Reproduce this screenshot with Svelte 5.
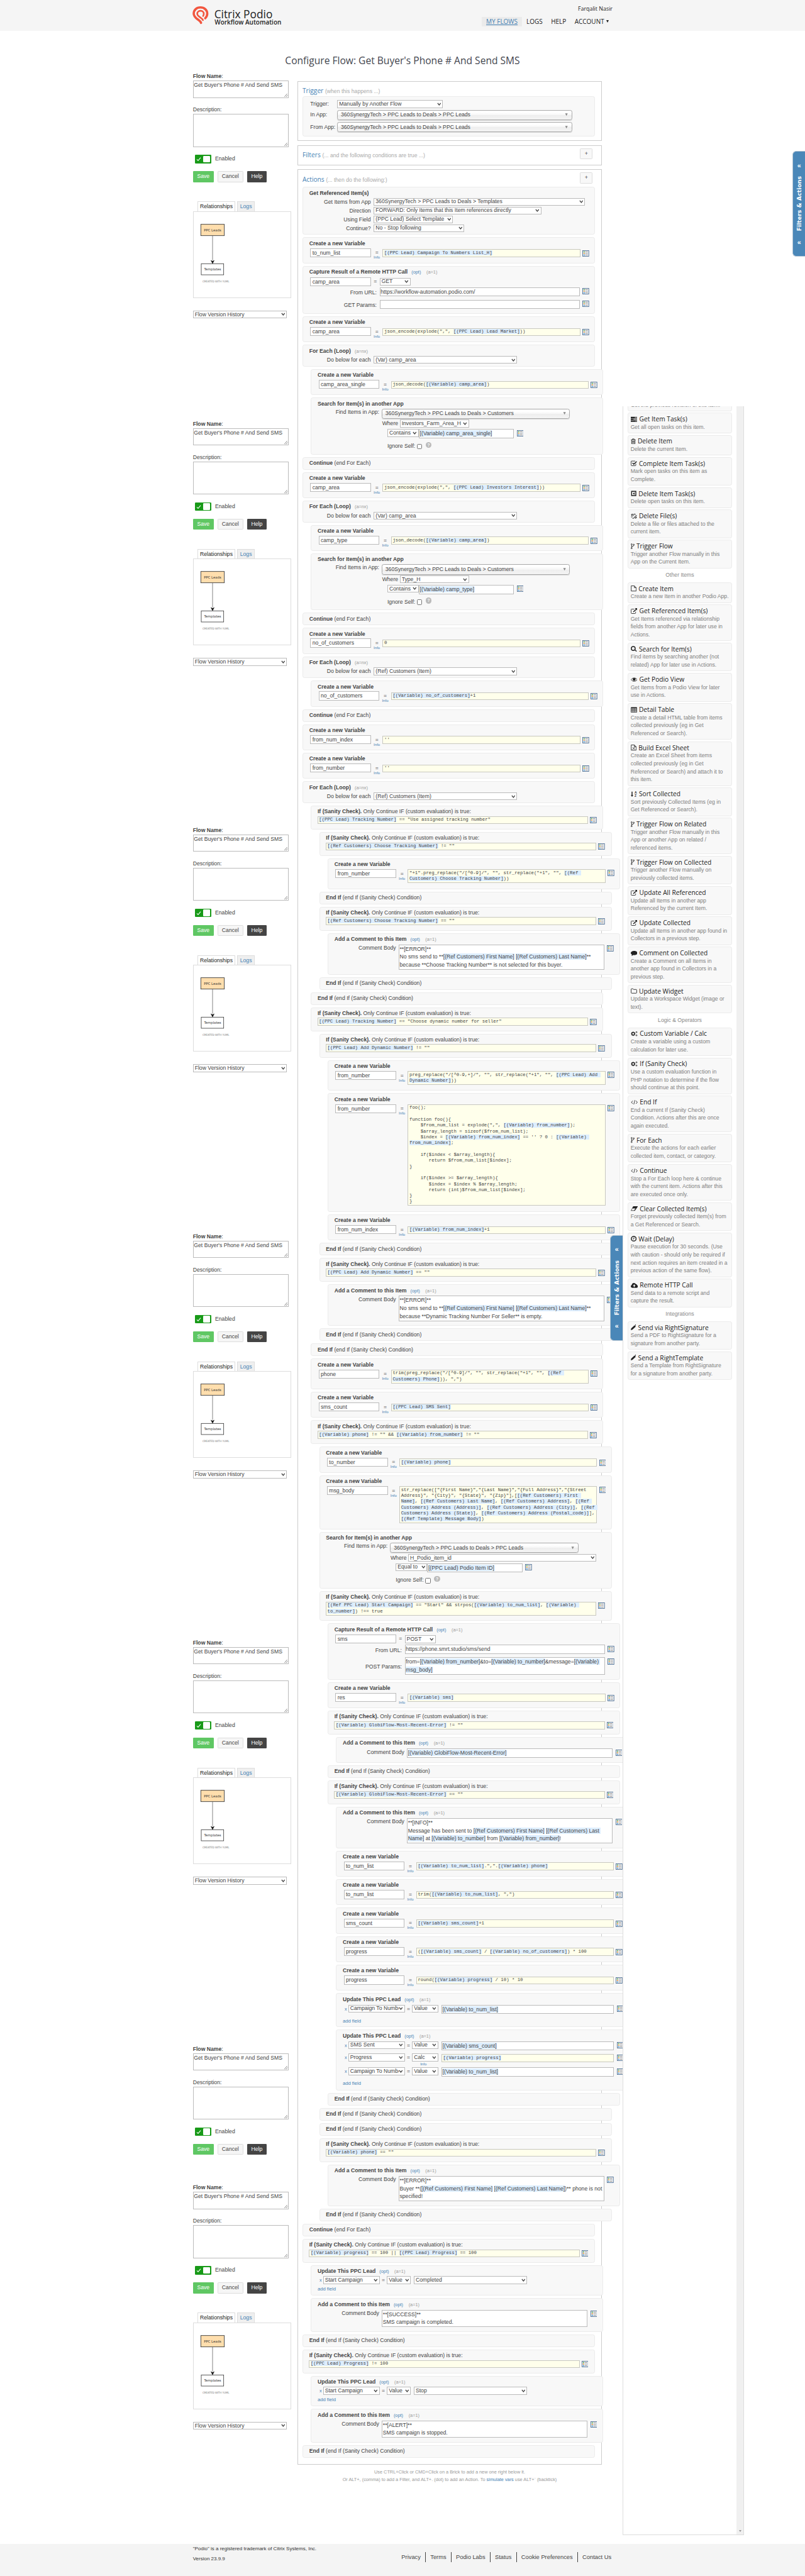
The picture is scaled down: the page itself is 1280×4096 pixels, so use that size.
<script>
  // One entry per brick in the flow: kind, nesting level and its contents.
  const v = (l, name, code) => ({ k: 'var', l, name, code });
  const iff = (l, code) => ({ k: 'if', l, code });
  const endIf = (l) => ({ k: 'end', l, head: 'End If', rest: ' (end If (Sanity Check) Condition)' });
  const cont = (l) => ({ k: 'end', l, head: 'Continue', rest: ' (end For Each)' });
  const each = (l, val) => ({ k: 'each', l, val });
  const comment = (l, code) => ({ k: 'comment', l, code });

  const bricks = [
    { k: 'ref', l: 0, code: '' },
    v(0, 'to_num_list', '[(PPC Lead) Campaign To Numbers List_H]'),
    { k: 'http', l: 0, name: 'camp_area', method: 'GET', url: 'https://workflow-automation.podio.com/', code: '' },
    v(0, 'camp_area', 'json_encode(explode(",", [(PPC Lead) Lead Market]))'),
    each(0, '(Var) camp_area'),
    v(1, 'camp_area_single', 'json_decode([(Variable) camp_area])'),
    { k: 'search', l: 1, app: 'Customers', field: 'Investors_Farm_Area_H', op: 'Contains', code: '[(Variable) camp_area_single]' },
    cont(0),
    v(0, 'camp_area', 'json_encode(explode(",", [(PPC Lead) Investors Interest]))'),
    each(0, '(Var) camp_area'),
    v(1, 'camp_type', 'json_decode([(Variable) camp_area])'),
    { k: 'search', l: 1, app: 'Customers', field: 'Type_H', op: 'Contains', code: '[(Variable) camp_type]' },
    cont(0),
    v(0, 'no_of_customers', '0'),
    each(0, '(Ref) Customers (Item)'),
    v(1, 'no_of_customers', '[(Variable) no_of_customers]+1'),
    cont(0),
    v(0, 'from_num_index', "''"),
    v(0, 'from_number', "''"),
    each(0, '(Ref) Customers (Item)'),
    iff(1, '[(PPC Lead) Tracking Number] == "Use assigned tracking number"'),
    iff(2, '[(Ref Customers) Choose Tracking Number] != ""'),
    v(3, 'from_number', '"+1".preg_replace("/[^0-9]/", "", str_replace("+1", "", [(Ref \nCustomers) Choose Tracking Number]))'),
    endIf(2),
    iff(2, '[(Ref Customers) Choose Tracking Number] == ""'),
    comment(3, '**[ERROR]**\nNo sms send to **[(Ref Customers) First Name] [(Ref Customers) Last Name]**\nbecause **Choose Tracking Number** is not selected for this buyer.'),
    endIf(2),
    endIf(1),
    iff(1, '[(PPC Lead) Tracking Number] == "Choose dynamic number for seller"'),
    iff(2, '[(PPC Lead) Add Dynamic Number] != ""'),
    v(3, 'from_number', 'preg_replace("/[^0-9,+]/", "", str_replace("+1", "", [(PPC Lead) Add \nDynamic Number]))'),
    v(3, 'from_number', `foo();

function foo(){
    $from_num_list = explode(",", [(Variable) from_number]);
    $array_length = sizeof($from_num_list);
    $index = [(Variable) from_num_index] == '' ? 0 : [(Variable) 
from_num_index];

    if($index < $array_length){
       return $from_num_list[$index];
}

    if($index >= $array_length){
       $index = $index % $array_length;
       return (int)$from_num_list[$index];
}
}`),
    v(3, 'from_num_index', '[(Variable) from_num_index]+1'),
    endIf(2),
    iff(2, '[(PPC Lead) Add Dynamic Number] == ""'),
    comment(3, '**[ERROR]**\nNo sms send to **[(Ref Customers) First Name] [(Ref Customers) Last Name]**\nbecause **Dynamic Tracking Number For Seller** is empty.'),
    endIf(2),
    endIf(1),
    v(1, 'phone', 'trim(preg_replace("/[^0-9]/", "", str_replace("+1", "", [(Ref \nCustomers) Phone])), ",")'),
    v(1, 'sms_count', '[(PPC Lead) SMS Sent]'),
    iff(1, '[(Variable) phone] != "" && [(Variable) from_number] != ""'),
    v(2, 'to_number', '[(Variable) phone]'),
    v(2, 'msg_body', 'str_replace(["{First Name}","{Last Name}","{Full Address}","{Street\nAddress}", "{City}", "{State}", "{Zip}"],[[(Ref Customers) First \nName], [(Ref Customers) Last Name], [(Ref Customers) Address], [(Ref \nCustomers) Address (Address)], [(Ref Customers) Address (City)], [(Ref \nCustomers) Address (State)], [(Ref Customers) Address (Postal_code)]],\n[(Ref Template) Message Body])'),
    { k: 'search', l: 2, app: 'PPC Leads', field: 'H_Podio_item_id', wide: true, op: 'Equal to', code: '[(PPC Lead) Podio Item ID]' },
    iff(2, '[(Ref PPC Lead) Start Campaign] == "Start" && strpos([(Variable) to_num_list], [(Variable) \nto_number]) !== true'),
    { k: 'http', l: 3, name: 'sms', method: 'POST', url: 'https://phone.smrt.studio/sms/send', code: 'from=[(Variable) from_number]&to=[(Variable) to_number]&message=[(Variable) \nmsg_body]' },
    v(3, 'res', '[(Variable) sms]'),
    iff(3, '[(Variable) GlobiFlow-Most-Recent-Error] != ""'),
    comment(4, '[(Variable) GlobiFlow-Most-Recent-Error]'),
    endIf(3),
    iff(3, '[(Variable) GlobiFlow-Most-Recent-Error] == ""'),
    comment(4, '**[INFO]**\nMessage has been sent to [(Ref Customers) First Name] [(Ref Customers) Last \nName] at [(Variable) to_number] from [(Variable) from_number]!'),
    v(4, 'to_num_list', '[(Variable) to_num_list].",".[(Variable) phone]'),
    v(4, 'to_num_list', 'trim([(Variable) to_num_list], ",")'),
    v(4, 'sms_count', '[(Variable) sms_count]+1'),
    v(4, 'progress', '([(Variable) sms_count] / [(Variable) no_of_customers]) * 100'),
    v(4, 'progress', 'round([(Variable) progress] / 10) * 10'),
    { k: 'update', l: 4, h: 81, rows: [['Campaign To Numbers', 'Value', '[(Variable) to_num_list]']] },
    { k: 'update', l: 4, h: 144.3, rows: [
      ['SMS Sent', 'Value', '[(Variable) sms_count]'],
      ['Progress', 'Calc', '[(Variable) progress]'],
      ['Campaign To Numbers', 'Value', '[(Variable) to_num_list]'],
    ] },
    endIf(3),
    endIf(2),
    endIf(2),
    iff(2, '[(Variable) phone] == ""'),
    comment(3, '**[ERROR]**\nBuyer **([(Ref Customers) First Name] [(Ref Customers) Last Name])** phone is not\nspecified!'),
    endIf(2),
    cont(0),
    iff(0, '[(Variable) progress] == 100 || [(PPC Lead) Progress] == 100'),
    { k: 'update', l: 1, h: 73, rows: [['Start Campaign', 'Pick', 'Completed']] },
    comment(1, '**[SUCCESS]**\nSMS campaign is completed.'),
    endIf(0),
    iff(0, '[(PPC Lead) Progress] != 100'),
    { k: 'update', l: 1, h: 73, rows: [['Start Campaign', 'Pick', 'Stop']] },
    comment(1, '**[ALERT]**\nSMS campaign is stopped.'),
    endIf(0),
  ];

  const lines = (s) => s.split('\n').length;

  function height(b) {
    const n = lines(b.code ?? '');
    switch (b.k) {
      case 'ref': return 114;
      case 'var': return n === 1 ? 62.03 : 14 * n + 45;
      case 'http': return n === 1 ? 114.6 : 134.2;
      case 'each': return 52;
      case 'search': return 135.4;
      case 'if': return 14 * n + 43;
      case 'comment': return 19.15 * n + 41.7;
      case 'update': return b.h;
      default: return 30;
    }
  }

  // Splits text into plain runs and highlighted [(…) …] tokens; a token that wraps becomes one run per line.
  function runs(s) {
    return s
      .split(/(\[\([^\]]*\])/)
      .filter((p) => p !== '')
      .flatMap((p) => {
        const tok = p.startsWith('[(');
        return p.split(/(\n)/).filter((t) => t !== '').map((t) => ({ t, tok: tok && t !== '\n' }));
      });
  }

  const sidebars = [829, 969, 969, 969, 969, 330.5, 640];

  const tools = [
    ['tasks', 'Get Item Task(s)', 'Get all open tasks on this item.'],
    ['trash', 'Delete Item', 'Delete the current Item.'],
    ['check', 'Complete Item Task(s)', 'Mark open tasks on this item as\nComplete.'],
    ['caret', 'Delete Item Task(s)', 'Delete open tasks on this item.'],
    ['unlink', 'Delete File(s)', 'Delete a file or files attached to the\ncurrent item.'],
    ['fork', 'Trigger Flow', 'Trigger another Flow manually in this\nApp on the Current Item.'],
    ['', 'Other Items'],
    ['file', 'Create Item', 'Create a new Item in another Podio App.'],
    ['ext', 'Get Referenced Item(s)', 'Get Items referenced via relationship\nfields from another App for later use in\nActions.'],
    ['search', 'Search for Item(s)', 'Find items by searching another (not\nrelated) App for later use in Actions.'],
    ['eye', 'Get Podio View', 'Get Items from a Podio View for later\nuse in Actions.'],
    ['table', 'Detail Table', 'Create a detail HTML table from items\ncollected previously (eg in Get\nReferenced or Search).'],
    ['excel', 'Build Excel Sheet', 'Create an Excel Sheet from items\ncollected previously (eg in Get\nReferenced or Search) and attach it to\nthis item.'],
    ['sort', 'Sort Collected', 'Sort previously Collected Items (eg in\nGet Referenced or Search).'],
    ['fork', 'Trigger Flow on Related', 'Trigger another Flow manually in this\nApp or another App on related /\nreferenced items.'],
    ['fork', 'Trigger Flow on Collected', 'Trigger another Flow manually on\npreviously collected items.'],
    ['ext', 'Update All Referenced', 'Update all Items in another app\nReferenced by the current Item.'],
    ['ext', 'Update Collected', 'Update all Items in another app found in\nCollectors in a previous step.'],
    ['comment', 'Comment on Collected', 'Create a Comment on all Items in\nanother app found in Collectors in a\nprevious step.'],
    ['folder', 'Update Widget', 'Update a Workspace Widget (image or\ntext).'],
    ['', 'Logic & Operators'],
    ['cogs', 'Custom Variable / Calc', 'Create a variable using a custom\ncalculation for later use.'],
    ['cogs', 'If (Sanity Check)', 'Use a custom evaluation function in\nPHP notation to determine if the flow\nshould continue at this point.'],
    ['code', 'End If', 'End a current If (Sanity Check)\nCondition. Actions after this are once\nagain executed.'],
    ['fork', 'For Each', 'Execute the actions for each earlier\ncollected item, contact, or category.'],
    ['code', 'Continue', 'Stop a For Each loop here & continue\nwith the current item. Actions after this\nare executed once only.'],
    ['eraser', 'Clear Collected Item(s)', 'Forget previously collected Item(s) from\na Get Referenced or Search.'],
    ['clock', 'Wait (Delay)', 'Pause execution for 30 seconds. (Use\nwith caution - should only be required if\nnext action requires an item created in a\nprevious action of the same flow).'],
    ['cloud', 'Remote HTTP Call', 'Send data to a remote script and\ncapture the result.'],
    ['', 'Integrations'],
    ['pencil', 'Send via RightSignature', 'Send a PDF to RightSignature for a\nsignature from another party.'],
    ['pencil', 'Send a RightTemplate', 'Send a Template from RightSignature\nfor a signature from another party.'],
  ];

  // Glyph width plus filled (f), cut-out (h), thin (s) and bold (b) outlines and rings (r) on a 14-unit high grid.
  const glyphs = {
    tasks: { w: 16, f: 'M0 1h16v3.4H0zM0 5.3h16v3.4H0zM0 9.6h16V13H0z', h: 'M9.5 2.2h5.5v1H9.5zM6.5 6.5h8.5v1H6.5zM11 10.8h4v1h-4z' },
    trash: { w: 12, s: 'M.5 3.5h11M4 3V1.3h4V3M2 3.8V13h8V3.8M4.3 5.8v5M6 5.8v5M7.7 5.8v5' },
    check: { w: 15, s: 'M12 8v3.5c0 .8-.5 1.3-1.3 1.3H2c-.8 0-1.3-.5-1.3-1.3V3C.7 2.2 1.2 1.7 2 1.7h8.5', b: 'M4 6l3.2 3.2L14 2.6' },
    caret: { w: 14, b: 'M2 2h10v10H2z', f: 'M9 4v6L4.8 7z' },
    unlink: { w: 15, s: 'M7 5.500L4.300 2.500C3 1.500.8 3.500 2 5l2.600 2.400M8 8.500l2.700 3c1.300 1 3.500-1 2.300-2.500L10.400 6.600M8 1v2.200M11 1.500L9.800 3.800M.8 8.800L3 9.500M7 13v-2.200M4 12.800l1-2M14.200 5.200l-2.300.4', fat: 1 },
    fork: { w: 9, s: 'M2 3.5v7M7.2 4.5c0 3-4.8 2-5.2 5', r: [[2, 2.2], [2, 11.8], [7, 3.2]] },
    file: { w: 14, s: 'M1 .8h7.5L13 5v8.2H1zM8.5 1v4.2H13' },
    excel: { w: 14, s: 'M1 .8h7.5L13 5v8.2H1zM8.5 1v4.2H13M4.4 6.200l5 5M9.400 6.200l-5 5' },
    ext: { w: 16, s: 'M11.5 8.5v3c0 .8-.5 1.3-1.3 1.3H2c-.8 0-1.3-.5-1.3-1.3V3.6c0-.8.5-1.3 1.3-1.3h6', b: 'M6 9l6.5-5.8', f: 'M9.5 0H16v6z' },
    search: { w: 15, b: 'M9.9 9.4l3.8 3.6M10.5 6.2a4.6 4.6 0 1 1-9.2 0a4.6 4.6 0 0 1 9.2 0z' },
    eye: { w: 16, s: 'M.7 7C4.5 1.6 11.5 1.6 15.3 7C11.5 12.4 4.5 12.4.7 7z', f: 'M11.4 6.5a3.4 3.4 0 1 1-6.8 0a3.4 3.4 0 0 1 6.800 0z' },
    table: { w: 15, s: 'M.8 1.5h13.4v11.5H.8zM.8 5.5h13.4M.8 9.2h13.4M5.2 2v11M9.8 2v11', f: 'M.8 1.2h13.4v2H.8z' },
    sort: { w: 15, b: 'M3 1v9.5', f: 'M0 9.5h6L3 13.5z', t: 1 },
    comment: { w: 16, f: 'M8 1.5c4.4 0 8 2.2 8 5s-3.6 5-8 5c-.8 0-1.5 0-2.2-.2C4.6 12.5 3 13.2 1.2 13.3c.8-.8 1.4-1.6 1.5-2.800C1 9.500 0 8.100 0 6.500c0-2.800 3.600-5 8-5z' },
    folder: { w: 15, s: 'M.8 3c0-.7.5-1.2 1.2-1.2h3.2l1.3 1.7h6.3c.8 0 1.3.5 1.3 1.2v6.5c0 .7-.5 1.2-1.3 1.2H2c-.7 0-1.2-.5-1.2-1.2z' },
    cogs: { w: 17, b: 'M9 7.2a3.3 3.3 0 1 1-6.6 0a3.3 3.3 0 0 1 6.6 0z', s: 'M5.7 2v2M5.7 10.4v2M.4 7.2h2M9 7.2h2M2 3.5l1.5 1.5M7.9 9.4l1.5 1.5M9.4 3.5L7.9 5M3.5 9.4L2 10.9', r: [[13.6, 3.4], [13.6, 10.9]] },
    code: { w: 17, s: 'M5 3.5L1.2 7 5 10.5M12 3.5L15.8 7 12 10.5M9.8 2L7.2 12' },
    eraser: { w: 17, f: 'M6.5 1.5h9.7c.6 0 .8.5.5 1l-6.5 9c-.4.6-.9 1-1.6 1H.8c-.6 0-.8-.5-.5-1l4.8-9c.3-.6.7-1 1.4-1z', h: 'M3.8 6.8h7.4l-3.3 4.5H1.5z' },
    clock: { w: 14, b: 'M12.7 7a5.7 5.5 0 1 1-11.4 0a5.7 5.5 0 0 1 11.4 0z', s: 'M7.5 3.5v4H4.5' },
    cloud: { w: 17, f: 'M4 13C1.8 13 0 11.5 0 9.5c0-1.6 1-2.8 2.4-3.3C2.4 3.5 4.5 1.5 7.3 1.5c2 0 3.8 1.1 4.5 2.7 1.6-.2 3 1 3 2.5 1.4.4 2.2 1.5 2.2 3 0 1.9-1.5 3.3-3.5 3.3z', h: 'M8.2 4.8l3.3 3.5H9.3v2.9H7.1V8.3H4.9z' },
    pencil: { w: 13, f: 'M0 13.5l.9-4L9 1.8l3 2.9L3.9 12.5zM9.8 1l1-.8c.4-.3.9-.3 1.2 0l1 1c.4.4.4.9 0 1.3l-.9.9z' },
  };

  const footLinks = ['Privacy', 'Terms', 'Podio Labs', 'Status', 'Cookie Preferences', 'Contact Us'];
</script>

{#snippet rich(s)}{#each runs(s) as r}{#if r.tok}<span class="tok">{r.t}</span>{:else}{r.t}{/if}{/each}{/snippet}

{#snippet sel(text, cls)}
  <div class="sel {cls}"><span>{text}</span><svg viewBox="0 0 10 8"><path d="M1.3 1.5L5 6l3.7-4.5" /></svg></div>
{/snippet}

{#snippet chosen(text, cls)}
  <div class="chosen {cls}"><span>{text}</span><svg viewBox="0 0 8 8"><path d="M.5 .5h7L4 7.5z" /></svg></div>
{/snippet}

{#snippet picker()}
  <svg class="picker" viewBox="0 0 16 15">
    <rect x=".7" y=".7" width="14.6" height="13.6" fill="#fbfcfe" stroke="#4f6f93" stroke-width="1.4" />
    <circle cx="4.2" cy="3.8" r="1.5" fill="#3d9a3d" />
    <circle cx="4.2" cy="7.5" r="1.5" fill="#e0872a" />
    <circle cx="4.2" cy="11.2" r="1.5" fill="#2d86c8" />
    <path d="M7.2 3.8h6M7.2 7.5h6M7.2 11.2h6" stroke="#555" stroke-width="1.3" stroke-dasharray="2.2 .6" />
  </svg>
{/snippet}

{#snippet title(text, opt, a)}
  <div class="title"><b>{text}</b>{#if opt}<span class="opt">(opt)</span>{/if}{#if a}<span class="arg">({a})</span>{/if}</div>
{/snippet}

<div class="page">
  <header>
    <svg class="logo" viewBox="0 0 216 52" width="216" height="52">
      <g fill="none" stroke="#f2563f" stroke-width="5.4" stroke-linecap="round">
        <path d="M20.5 39.500C18 32 3 29 3 17.5C3 9 9.5 2.7 19 2.7C28.5 2.7 35.3 9 35.3 17.5C35.3 22 33.5 25.5 30.5 28.5" />
        <path d="M25 33C22.5 26 11.5 25 11.5 18C11.5 13.6 15 10.8 19.2 10.8C23.5 10.8 27 13.6 27 18C27 20.2 26.4 21.8 25.4 23.2" stroke-width="4" />
      </g>
      <text x="52" y="28" font-size="27.5" textLength="139" lengthAdjust="spacingAndGlyphs">Citrix Podio</text>
      <text x="53" y="43.5" font-size="17" font-weight="600" textLength="159" lengthAdjust="spacingAndGlyphs">Workflow Automation</text>
    </svg>
    <div class="who">
      <div class="user">Farqalit Nasir</div>
      <nav><a class="on">MY FLOWS</a><a>LOGS</a><a>HELP</a><a>ACCOUNT<i></i></a></nav>
    </div>
  </header>

  <h1>Configure Flow: Get Buyer's Phone # And Send SMS</h1>

  <main>
    <aside class="left">
      {#each sidebars as h, i}
        <section style="height:{h}px">
          <div class="lab"><b>Flow Name</b>:</div>
          <div class="area small">Get Buyer's Phone # And Send SMS<svg class="grip" viewBox="0 0 8 8"><path d="M0 8L7 0M4 8l4-4.5" /></svg></div>
          <div class="lab desc">Description:</div>
          <div class="area big"><svg class="grip" viewBox="0 0 8 8"><path d="M0 8L7 0M4 8l4-4.5" /></svg></div>
          <div class="enabled">
            <div class="toggle"><svg viewBox="0 0 12 10"><path d="M1 5.5L4.3 9L11 1" /></svg><i></i></div>
            <span>Enabled</span>
          </div>
          <div class="btns"><span class="save">Save</span><span class="cancel">Cancel</span><span class="help">Help</span></div>
          {#if i !== 5}
            <div class="tabs"><span class="cur">Relationships</span><span class="other">Logs</span></div>
            <div class="rel">
              <svg viewBox="0 0 232 204" width="232" height="204">
                <rect x="17" y="29.5" width="56" height="27" fill="#ffdead" stroke="#333" stroke-width="1.3" />
                <text x="45" y="46" text-anchor="middle">PPC Leads</text>
                <path d="M45 57v58" stroke="#444" stroke-width="1" />
                <path d="M41 115.5l4 2 4-2-4 8z" fill="#111" stroke="#111" stroke-width=".6" />
                <rect x="18" y="123.5" width="53.5" height="26.5" fill="#fff" stroke="#333" stroke-width="1.2" />
                <text x="45" y="140" text-anchor="middle">Templates</text>
                <text x="21" y="168.5" class="yuml" textLength="64">CREATED WITH YUML</text>
              </svg>
            </div>
            {@render sel('Flow Version History', 'hist')}
          {/if}
        </section>
      {/each}
    </aside>

    <div class="center">
      <div class="panel trig">
        <div class="phead"><h2>Trigger</h2><small>(when this happens ...)</small></div>
        <div class="brick tbrick">
          <div class="trow"><span class="tl">Trigger:</span>{@render sel('Manually by Another Flow', 'w252')}</div>
          <div class="trow app"><span class="tl">In App:</span>{@render chosen('360SynergyTech > PPC Leads to Deals > PPC Leads', 'w560')}</div>
          <div class="trow app"><span class="tl">From App:</span>{@render chosen('360SynergyTech > PPC Leads to Deals > PPC Leads', 'w560')}</div>
        </div>
      </div>
      <div class="panel filt">
        <div class="phead"><h2>Filters</h2><small>(... and the following conditions are true ...)</small><span class="plus">+</span></div>
      </div>
      <div class="panel acts">
        <div class="phead"><h2>Actions</h2><small>(... then do the following:)</small><span class="plus">+</span></div>
        {#each bricks as b}
          <div class="brick l{b.l}" style="height:{height(b)}px">
            {#if b.k === 'ref'}
              {@render title('Get Referenced Item(s)')}
              <div class="frow"><span class="fl">Get Items from App</span>{@render sel('360SynergyTech > PPC Leads to Deals > Templates', 'w504')}</div>
              <div class="frow"><span class="fl">Direction</span>{@render sel('FORWARD: Only Items that this Item references directly', 'w400')}</div>
              <div class="frow"><span class="fl">Using Field</span>{@render sel('(PPC Lead) Select Template', 'w189')}</div>
              <div class="frow"><span class="fl">Continue?</span>{@render sel('No - Stop following', 'w216')}</div>
            {:else if b.k === 'var'}
              {@render title('Create a new Variable')}
              <div class="row">
                <div class="name">{b.name}</div>
                <div class="eq">=<em>Info</em></div>
                <div class="code w471" class:one={lines(b.code) === 1}>{@render rich(b.code)}</div>
                <div class="pk" class:low={lines(b.code) === 1}>{@render picker()}</div>
              </div>
            {:else if b.k === 'http'}
              {@render title('Capture Result of a Remote HTTP Call', true, 'a=1')}
              <div class="row r26"><div class="name n2">{b.name}</div><div class="eqs">=</div>{@render sel(b.method, 'meth')}</div>
              <div class="row r30"><span class="hl">From URL:</span><div class="box w477">{b.url}</div>{@render picker()}</div>
              <div class="row"><span class="hl" class:tall={lines(b.code) > 1}>{b.method} Params:</span><div class="box w477">{@render rich(b.code)}</div>{@render picker()}</div>
            {:else if b.k === 'each'}
              <div class="title"><b>For Each (Loop)</b><span class="arg near">(a=nx)</span></div>
              <div class="frow each"><span class="fl">Do below for each</span>{@render sel(b.val, 'w342')}</div>
            {:else if b.k === 'search'}
              {@render title('Search for Item(s) in another App')}
              <div class="row s1"><span class="cl">Find Items in App:</span>{@render chosen('360SynergyTech > PPC Leads to Deals > ' + b.app, 'w449')}</div>
              <div class="row s2"><span class="wl">Where</span>{@render sel(b.field, b.wide ? 'w449' : 'w165')}</div>
              <div class="row s3">{@render sel(b.op, 'w75')}<div class="box w227">{@render rich(b.code)}</div>{@render picker()}</div>
              <div class="row s4"><span class="il">Ignore Self:</span><i class="cb"></i><span class="q">?</span></div>
            {:else if b.k === 'if'}
              <div class="title"><b>If (Sanity Check).</b> Only Continue IF (custom evaluation) is true:</div>
              <div class="row ifr"><div class="code w645">{@render rich(b.code)}</div><div class="pk">{@render picker()}</div></div>
            {:else if b.k === 'comment'}
              {@render title('Add a Comment to this Item', true, 'a=1')}
              <div class="row cm"><span class="cl">Comment Body</span><div class="box w491">{@render rich(b.code)}</div>{@render picker()}</div>
            {:else if b.k === 'update'}
              {@render title('Update This PPC Lead', true, 'a=1')}
              {#each b.rows as r}
                <div class="row up" class:calc={r[1] === 'Calc'} class:pick={r[1] === 'Pick'}>
                  <span class="x">x</span>{@render sel(r[0], 'w135')}<div class="eqs u">=</div>
                  {#if r[1] === 'Pick'}
                    {@render sel('Value', 'w57 gap')}{@render sel(r[2], 'w270')}
                  {:else}
                    <div class="modes">{@render sel(r[1], 'w62')}{#if r[1] === 'Calc'}<em>Info</em>{/if}</div>
                    {#if r[1] === 'Calc'}<div class="code w411">{@render rich(r[2])}</div>{:else}<div class="box w411">{@render rich(r[2])}</div>{/if}
                    {@render picker()}
                  {/if}
                </div>
              {/each}
              <div class="add"><a>add field</a></div>
            {:else}
              <div class="title"><b>{b.head}</b>{b.rest}</div>
            {/if}
          </div>
        {/each}
      </div>
      <p class="hint">Use CTRL+Click or CMD+Click on a Brick to add a new one right below it.<br />Or ALT+, (comma) to add a Filter, and ALT+. (dot) to add an Action. To <a>simulate vars</a> use ALT+` (backtick)</p>
    </div>

    <aside class="right">
      <div class="list">
        <div class="tool first"><p>Get the previous revision of this item.</p></div>
        {#each tools as t}
          {#if t[0]}
            {@const g = glyphs[t[0]]}
            <div class="tool">
              <h3>
                <svg viewBox="0 0 {g.w} 14" width={g.w} height="14">
                  {#if g.f}<path d={g.f} fill="#222" />{/if}
                  {#if g.h}<path d={g.h} fill="#f8f8f8" />{/if}
                  {#if g.s}<path d={g.s} fill="none" stroke="#222" stroke-width={g.fat ? 1.6 : 1.3} />{/if}
                  {#if g.b}<path d={g.b} fill="none" stroke="#222" stroke-width="2.2" />{/if}
                  {#each g.r ?? [] as c}<circle cx={c[0]} cy={c[1]} r="1.4" fill="none" stroke="#222" stroke-width="1.2" />{/each}
                  {#if g.t}<text x="9" y="6.5" class="az">A</text><text x="9" y="13.5" class="az">Z</text>{/if}
                </svg>{t[1]}
              </h3>
              <p>{t[2]}</p>
            </div>
          {:else}
            <div class="group">{t[1]}</div>
          {/if}
        {/each}
      </div>
      <div class="scroll"><i></i></div>
    </aside>
  </main>

  <footer>
    <div class="legal">"Podio" is a registered trademark of Citrix Systems, Inc.<br />Version 23.9.9</div>
    <div class="links">{#each footLinks as f}<a>{f}</a>{/each}</div>
  </footer>

  <div class="flag top"><b>«</b><span>Filters &amp; Actions</span><b>«</b></div>
  <div class="flag mid"><b>«</b><span>Filters &amp; Actions</span><b>«</b></div>
</div>

<style>
  :global(body) { margin: 0; background: #fff; }
  * { box-sizing: border-box; }
  .page {
    zoom: 0.66667; position: relative; display: flex; flex-direction: column;
    width: 1920px; height: 6144px; overflow: hidden; background: #fff;
    font: 13px/20px "Liberation Sans", Arial, sans-serif; color: #444;
  }
  em { font-style: normal; }
  a { color: #4682b4; }

  header { display: flex; justify-content: space-between; height: 73px; background: #f5f5f5; padding: 0 459px; flex: none; }
  .logo { margin-top: 15px; font-family: "Open Sans", sans-serif; fill: #222; overflow: visible; }
  .who { font-family: "Open Sans", sans-serif; color: #222; text-align: right; }
  .user { font-size: 13.3px; line-height: 20px; margin-top: 11.5px; }
  nav { display: flex; margin-top: 8.5px; }
  nav a { color: #222; font-size: 15px; line-height: 23px; padding: 0 10px; }
  nav a:last-child { padding-right: 9px; }
  nav a.on { color: #4682b4; background: #ebebeb; text-decoration: underline; padding: 0 11px; }
  nav i { display: inline-block; border: 4px solid transparent; border-top: 6px solid #222; border-bottom: 0; margin-left: 5px; vertical-align: 2px; }

  h1 { margin: 0; height: 93px; padding-top: 51.5px; font: 400 23.4px/40px "Open Sans", sans-serif; color: #43464f; text-align: center; flex: none; }
  main { display: grid; grid-template-columns: 250px 725px 50px 290px; padding-left: 460px; height: 5901px; flex: none; }

  .left { padding-top: 6.3px; }
  .lab { height: 20px; }
  .desc { margin-top: 18.5px; }
  .area { position: relative; width: 229px; border: 1.5px solid #bbb; background: #fff; padding-left: 1px; white-space: nowrap; }
  .small { height: 41.3px; }
  .big { height: 78.7px; }
  .grip { position: absolute; right: 1px; bottom: 1px; width: 8px; height: 8px; }
  .grip path { stroke: #555; stroke-width: 1; fill: none; }
  .enabled { display: flex; align-items: center; gap: 9.5px; margin: 19px 0 0 4.5px; }
  .toggle { display: flex; align-items: center; width: 39px; height: 20px; background: #189a18; border-radius: 2px; padding-left: 4px; }
  .toggle svg { width: 12px; height: 9px; }
  .toggle path { fill: none; stroke: #fff; stroke-width: 1.7; }
  .toggle i { width: 16.5px; height: 16px; margin-left: 4.5px; background: #fff; border-radius: 2px; }
  .btns { display: flex; margin-top: 19px; }
  .btns span { height: 26px; line-height: 25px; text-align: center; border-radius: 2px; }
  .btns .save { width: 50px; background: #5fc763; color: #fff; }
  .btns .cancel { width: 62px; margin: 0 8.5px; background: #f6f6f6; border: 1.5px solid #ddd; line-height: 23px; }
  .btns .help { width: 47.5px; background: #444; color: #fff; }
  .tabs { display: flex; gap: 4px; margin: 46px 0 0 10.5px; height: 23px; }
  .tabs span { border: 1.5px solid #ddd; border-bottom: 0; line-height: 22px; text-align: center; }
  .tabs .cur { width: 91px; color: #222; background: #fff; }
  .tabs .other { width: 42.5px; color: #4682b4; background: #efefef; }
  .rel { width: 235px; height: 207px; border: 1.5px solid #ddd; }
  .rel text { font: 8px "DejaVu Sans", sans-serif; fill: #333; }
  .rel text.yuml { font-size: 6.5px; fill: #888; }

  .sel { display: flex; justify-content: space-between; align-items: center; flex: none; height: 18.4px; border: 1.5px solid #bbb; background: #fff; padding: 0 3px; line-height: 16px; overflow: hidden; white-space: nowrap; }
  .sel span { overflow: hidden; flex: 1; }
  .sel svg { width: 10px; height: 8px; flex: none; }
  .sel path { fill: none; stroke: #444; stroke-width: 1.9; }
  .hist { width: 224.5px; margin-top: 30px; }
  .chosen { display: flex; justify-content: space-between; align-items: center; flex: none; height: 24.5px; border: 1.5px solid #aaa; border-radius: 5px; background: linear-gradient(#fff 20%, #f6f6f6 50%, #eee 52%, #f4f4f4); box-shadow: 0 1px 1px rgba(0, 0, 0, .12); padding: 0 8px 0 7px; white-space: nowrap; }
  .chosen svg { width: 8px; height: 7px; }
  .chosen path { fill: #888; }

  .w252 { width: 252px; } .w560 { width: 560.5px; } .w504 { width: 504px; } .w400 { width: 400px; }
  .w189 { width: 189px; } .w216 { width: 216px; } .w342 { width: 342px; } .w449 { width: 449px; }
  .w165 { width: 165.5px; } .w75 { width: 75px; } .w135 { width: 135px; } .w62 { width: 62.5px; }
  .w57 { width: 57px; } .w270 { width: 270.5px; } .w471 { width: 471.5px; } .w477 { width: 477px; }
  .w227 { width: 227px; } .w645 { width: 645.5px; } .w491 { width: 491px; } .w411 { width: 411.5px; }
  .gap { margin-right: 7px; }

  .center { padding-top: 27.4px; width: 725px; }
  .panel { border: 1.5px solid #ccc; padding-left: 10px; width: 725px; }
  .trig { height: 143px; }
  .filt { height: 47.5px; margin-top: 10px; }
  .acts { height: 5474px; margin-top: 10px; }
  .phead { display: flex; align-items: baseline; height: 40.5px; padding-top: 11px; }
  .trig .phead { height: 35.1px; }
  h2 { margin: 0 4px 0 0; font: 400 15.3px/22px "Open Sans", sans-serif; color: #4682b4; }
  small { font-size: 13px; color: #aaa; }
  .plus { margin: -5px 20px 0 auto; align-self: flex-start; width: 30px; height: 26px; line-height: 22px; text-align: center; border: 1.5px solid #ddd; border-radius: 2px; background: #f8f8f8; }

  .brick { width: 697.5px; border: 1.5px solid #ebebeb; border-radius: 5px; background: #f8f8f8; padding-top: 3.5px; margin-bottom: 6px; position: relative; }
  .l1 { margin-left: 20px; } .l2 { margin-left: 40px; } .l3 { margin-left: 60px; } .l4 { margin-left: 80px; }
  .tbrick { height: 95px; padding: 7.5px 0 0 17px; }
  .trow { display: flex; height: 23px; }
  .tl { width: 64.5px; white-space: nowrap; flex: none; }
  .trow.app { height: 29.2px; }
  .app .tl { padding-top: 2.5px; }

  .title { height: 20px; margin-left: 14.5px; white-space: pre; }
  .opt, .arg { font-size: 11px; color: #999; }
  .opt { color: #4682b4; margin-left: 9px; }
  .arg { margin-left: 13px; }
  .near { margin-left: 9px; }

  .frow { display: flex; height: 21px; position: relative; top: 1px; }
  .fl { width: 161.5px; margin-right: 7px; text-align: right; line-height: 18px; white-space: nowrap; }
  .frow.each { top: 1.8px; }
  .row { display: flex; align-items: flex-start; }
  .name { width: 145px; height: 21.2px; margin: 1px 0 0 17px; padding-left: 3.5px; line-height: 19px; border: 1.5px solid #bbb; background: #fff; flex: none; }
  .n2 { margin-top: 2px; }
  .eq { width: 27.7px; text-align: center; line-height: 12px; padding-top: 5px; flex: none; }
  em { display: block; font-size: 9.2px; line-height: 12px; color: #4682b4; text-align: center; }
  .code { flex: none; margin-top: 1px; padding: 1px 0 1px 2.5px; border: 1.5px solid #c8c8c0; background: #ffffeb; font: 11px/14px "Liberation Mono", monospace; white-space: pre; }
  .code.one { margin-top: 3px; }
  .tok { background: #ddeeff; }
  .picker { width: 16px; height: 15px; flex: none; margin: 2px 0 0 6.5px; }
  .pk { margin-top: 1px; }
  .pk .picker { margin: 1.5px 0 0 4.7px; }
  .pk.low { margin-top: 4px; }
  .box { flex: none; min-height: 22px; border: 1.5px solid #bbb; background: #fff; padding-left: 1px; line-height: 19.15px; white-space: pre; }
  .eqs { width: 20.5px; text-align: center; flex: none; padding-top: 2px; }
  .r26 { height: 26px; }
  .r30 { height: 30px; }
  .meth { width: 74px; margin-top: 3.7px; }
  .hl { width: 175.5px; margin-right: 7px; text-align: right; padding-top: 3.5px; flex: none; }
  .hl.tall { padding-top: 13.5px; }
  .cl { width: 161.5px; margin-right: 6.3px; text-align: right; flex: none; }
  .s1 { height: 27.8px; padding-top: 1px; }
  .s1 .cl { margin-top: -1.5px; }
  .s2 { height: 22.2px; padding-left: 168.5px; line-height: 18px; }
  .wl { width: 42px; }
  .s3 { height: 31px; padding-left: 181px; }
  .s4 { padding-left: 181px; }
  .il { width: 70px; white-space: nowrap; }
  .cb { width: 13px; height: 13px; border: 1.5px solid #777; border-radius: 2.5px; background: #fff; margin-top: 4px; }
  .q { width: 14px; height: 14px; border-radius: 50%; background: #bbb; color: #fff; font: bold 10px/14px "Liberation Sans", sans-serif; text-align: center; margin: -.5px 0 0 8.5px; }
  .ifr { padding-left: 14px; }
  .ifr .code { margin-top: .3px; }
  .cm .box { margin-top: 2.2px; }
  .cm .cl { margin-top: 1.3px; }
  .cm .picker { margin-top: 4.3px; }

  .up { height: 29.7px; padding-top: 2.2px; }
  .x { width: 27.5px; padding-left: 19px; font-size: 11px; color: #4682b4; flex: none; }
  .eqs.u { width: 17.5px; padding-top: 0; line-height: 18px; }
  .modes { width: 70px; flex: none; }
  .modes em { margin-right: 16px; }
  .calc { height: 33px; }
  .up .code { margin-top: 1.5px; }
  .pick { height: 21.5px; padding-top: 1.5px; }
  .add { margin: 1px 0 0 14.5px; font-size: 11.5px; }
  .pick + .add { line-height: 22px; margin-top: 0; }

  .hint { margin: 9px 0 0; text-align: center; font-size: 11px; line-height: 19.3px; color: #999; }

  .right { grid-column: 4; margin-top: 803px; height: 5078px; display: flex; background: #fff; border: 1.5px solid #ddd; border-top: 0; overflow: hidden; z-index: 2; position: relative; }
  .list { flex: 1; margin-top: -37.5px; padding-left: 10.5px; }
  .tool { width: 249px; border: 1.5px solid #ebebeb; border-radius: 5px; background: #f8f8f8; padding: 4px 0 3.9px 5.5px; margin-bottom: 4.1px; }
  .first { height: 49px; padding-top: 23.5px; }
  h3 { display: flex; align-items: center; gap: 5px; margin: 0; height: 19px; font: 400 15.3px/19px "Open Sans", sans-serif; color: #222; white-space: nowrap; }
  h3 svg { flex: none; }
  .az { font: bold 7.5px "Liberation Sans", sans-serif; fill: #222; }
  .tool p { margin: 0; line-height: 19.05px; color: #808080; white-space: pre; }
  .group { width: 249px; height: 29.5px; line-height: 25px; text-align: center; color: #888; }
  .scroll { width: 17px; background: #f0f0f0; display: flex; align-items: flex-end; justify-content: center; padding-bottom: 7px; }
  .scroll i { border: 4px solid transparent; border-top: 5px solid #999; border-bottom: 0; }

  footer { flex: 1; background: #f4f4f4; display: flex; padding-left: 460px; color: #333; }
  .legal { width: 487px; font-size: 12px; line-height: 24.3px; }
  .links { display: flex; font-size: 14px; line-height: 24px; padding-top: 20px; height: 44px; }
  .links a { color: #444; padding: 0 11px 0 10.5px; border-right: 1.5px solid #444; white-space: nowrap; }
  .links a:last-child { border: 0; }

  .flag { position: absolute; z-index: 3; width: 30px; height: 252px; background: #4a87b8; border-radius: 9px 0 0 9px; color: #fff; display: flex; flex-direction: column; align-items: center; justify-content: space-between; padding: 22px 0; border: 1.5px solid #b5c5d3; border-right: 0; }
  .flag.top { left: 1890.5px; top: 360px; }
  .flag.mid { left: 1455.5px; top: 2945.5px; }
  .flag span { writing-mode: vertical-rl; transform: rotate(180deg); font: bold 14px/18px "DejaVu Sans", sans-serif; white-space: nowrap; }
  .flag b { font: bold 16px/22px "Liberation Sans", sans-serif; }
</style>
